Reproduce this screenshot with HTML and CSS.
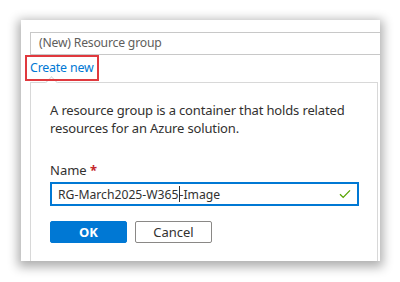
FILE: index.html
```html
<!DOCTYPE html>
<html>
<head>
<meta charset="utf-8">
<link rel="stylesheet" href="styles.css">
</head>
<body>
<div class="frame">
  <div class="card">
    <div class="select">(New) Resource group</div>
    <div class="link-row">
      <a class="create-link">Create new</a>
    </div>
    <div class="callout">
      <span class="notch"></span>
      <p class="desc">A resource group is a container that holds related resources for an Azure solution.</p>
      <label class="label">Name <span class="req">*</span></label>
      <div class="name-input">
        <span class="value">RG-March2025-W365<span class="caret"></span>-Image</span>
        <svg class="check" width="12" height="10" viewBox="0 0 12 10"><path d="M1 5.2 L4.2 8.4 L11 1.4" fill="none" stroke="#57a300" stroke-width="1.3"/></svg>
      </div>
      <div class="buttons">
        <button class="btn primary">OK</button>
        <button class="btn secondary">Cancel</button>
      </div>
    </div>
  </div>
</div>
</body>
</html>
```

FILE: styles.css
```css
html, body {
  margin: 0;
  padding: 0;
  background: #ffffff;
  width: 400px;
  height: 282px;
  overflow: hidden;
}
.frame {
  padding: 20px 20px 0 21px;
}
.card {
  width: 359px;
  height: 241px;
  background: #ffffff;
  box-shadow: 0 3px 10px 3px rgba(0,0,0,0.32);
  overflow: hidden;
  font-family: "Noto Sans", "Open Sans", sans-serif;
  padding: 12px 0 0 9px;
  box-sizing: border-box;
}
.select {
  height: 23px;
  border: 1px solid #c8c8c8;
  border-right: none;
  box-sizing: border-box;
  font-size: 12.2px;
  letter-spacing: -0.2px;
  line-height: 20px;
  color: #605e5c;
  padding-left: 8px;
}
.link-row {
  height: 27px;
  position: relative;
}
.create-link {
  display: inline-block;
  margin-left: -5px;
  margin-top: -2px;
  border: 2px solid #e0393e;
  padding: 0 4px 0 3px;
  height: 26px;
  box-sizing: border-box;
  font-size: 12.4px;
  letter-spacing: -0.2px;
  line-height: 21px;
  color: #0078d4;
  position: relative;
  z-index: 2;
}
.callout {
  position: relative;
  margin-right: 2px;
  border: 1px solid #d8d8d8;
  border-bottom: none;
  height: 200px;
  box-sizing: border-box;
  padding: 18px 4px 0 19px;
  color: #323130;
}
.notch {
  position: absolute;
  left: 16px;
  top: -5px;
  width: 8px;
  height: 8px;
  background: #ffffff;
  border-left: 1px solid #d8d8d8;
  border-top: 1px solid #d8d8d8;
  transform: rotate(45deg);
}
.desc {
  margin: 0;
  width: 320px;
  font-size: 13px;
  letter-spacing: -0.15px;
  line-height: 18px;
}
.label {
  display: block;
  margin-top: 24px;
  font-size: 13px;
  line-height: 18px;
}
.req {
  color: #c4262c;
  font-weight: bold;
}
.name-input {
  margin-top: 3px;
  width: 309px;
  height: 24px;
  border: 2px solid #0078d4;
  box-sizing: border-box;
  display: flex;
  align-items: center;
  justify-content: space-between;
  padding: 0 6px 0 6px;
  font-size: 12.2px;
  color: #323130;
}
.caret {
  display: inline-block;
  width: 1px;
  height: 16px;
  background: #323130;
  vertical-align: -3px;
}
.buttons {
  display: flex;
  gap: 8px;
  margin-top: 15px;
}
.btn {
  width: 77px;
  height: 22px;
  border-radius: 2px;
  font-family: "Noto Sans", "Open Sans", sans-serif;
  font-size: 13px;
  padding: 0;
  box-sizing: border-box;
}
.primary {
  background: #0078d4;
  border: 1px solid #0078d4;
  color: #ffffff;
  font-weight: bold;
}
.secondary {
  background: #ffffff;
  border: 1px solid #8a8886;
  color: #323130;
}
```
